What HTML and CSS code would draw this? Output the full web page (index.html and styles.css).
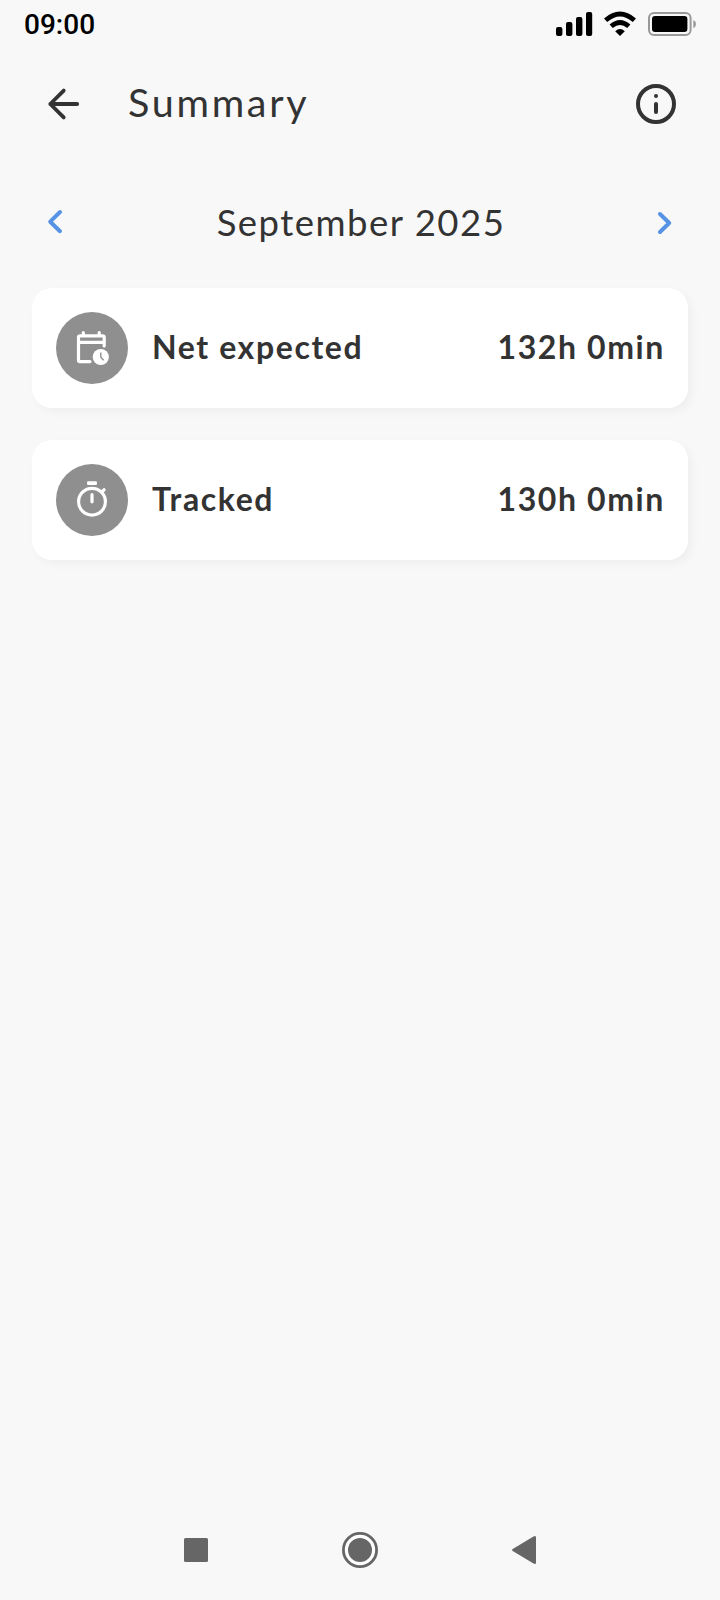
FILE: index.html
```html
<!DOCTYPE html>
<html lang="en">
<head>
<meta charset="utf-8">
<title>Summary</title>
<link rel="stylesheet" href="styles.css">
</head>
<body>
<div class="screen">
  <div class="status">
    <span class="time">09:00</span>
    <svg width="144" height="48" viewBox="552 0 144 48">
      <rect x="556" y="27" width="6.4" height="9" rx="2"/>
      <rect x="566" y="22" width="6.4" height="14" rx="2"/>
      <rect x="576" y="17" width="6.4" height="19" rx="2"/>
      <rect x="586" y="12" width="6.2" height="24" rx="2"/>
      <path d="M605.6 20.3Q620 7.8 634.4 20.3M611.2 26.3Q620 18.6 628.8 26.3" fill="none" stroke="#000" stroke-width="4.8"/>
      <path d="M615.2 31.3Q620 26.6 624.8 31.3L620 36Z"/>
      <rect x="649" y="13" width="41.6" height="22" rx="5" fill="none" stroke="#999" stroke-width="2"/>
      <rect x="652" y="16" width="35.4" height="16" rx="3"/>
      <path d="M693.3 20Q696 21 696 24T693.3 28Z" fill="#999"/>
    </svg>
  </div>
  <header class="appbar">
    <svg width="36" height="36" viewBox="46 86 36 36"><path class="ink" d="M77.2 104H50.3M63.7 90.6L50.3 104L63.7 117.4" stroke-width="3.8"/></svg>
    <h1 class="title">Summary</h1>
    <svg width="40" height="40" viewBox="636 84 40 40"><circle class="ink" cx="656" cy="104" r="18" stroke-width="4"/><path class="ink" d="M656 96h.01M656 104v8" stroke-width="4"/></svg>
  </header>
  <div class="month">
    <svg width="16" height="28" viewBox="47 209 16 28"><path class="blue" d="M60 212L50.2 221.7L60 231.2"/></svg>
    <h2 class="month-name">September 2025</h2>
    <svg width="16" height="28" viewBox="657 209 16 28"><path class="blue" d="M660 214L669.2 223L660 232"/></svg>
  </div>
  <main class="cards">
    <section class="card">
      <svg width="72" height="72" viewBox="56 312 72 72">
        <circle cx="92" cy="348" r="36" fill="#8f8f8f"/>
        <path class="white" d="M90 361.6H80Q78.5 361.6 78.5 360V337.5Q78.5 335.8 80.2 335.8H102.5Q104.2 335.8 104.2 337.5V346M78.5 342.4H104M83.3 332.5V336M99.2 332.5V336"/>
        <circle cx="100.8" cy="357" r="8.1" fill="#fff"/>
        <path d="M100.8 352.5V357.3L103.6 360.2" fill="none" stroke="#8f8f8f" stroke-width="1.4"/>
      </svg>
      <span class="label">Net expected</span><span class="value">132h 0min</span>
    </section>
    <section class="card">
      <svg width="72" height="72" viewBox="56 464 72 72">
        <circle cx="92" cy="500" r="36" fill="#8f8f8f"/>
        <circle class="white" cx="92" cy="501.7" r="13.4"/>
        <rect x="87" y="481.2" width="10" height="3.8" rx="1.2" fill="#fff"/>
        <path class="white" d="M92 494.6V501.8M101.8 491.9L104.1 489.8"/>
      </svg>
      <span class="label">Tracked</span><span class="value">130h 0min</span>
    </section>
  </main>
  <nav class="nav">
    <svg width="24" height="36" viewBox="0 0 24 36"><rect y="6" width="24" height="24" rx="1.5"/></svg>
    <svg width="36" height="36" viewBox="0 0 36 36"><circle cx="18" cy="18" r="16.6" fill="#fff" stroke="#666" stroke-width="2.8"/><circle cx="18" cy="18" r="12"/></svg>
    <svg width="24" height="36" viewBox="0 0 24 36"><path d="M.7 17Q-.6 18 .7 19L21.5 31.6Q24 32.9 24 30.5V5.5Q24 3.1 21.5 4.4Z"/></svg>
  </nav>
</div>
</body>
</html>
```
FILE: styles.css
```css
* { box-sizing: border-box; }
body { margin: 0; background: #f8f8f8; color: #333; font-family: Lato, sans-serif; }
svg { display: block; flex: none; }
h1, h2 { margin: 0; font-weight: 400; white-space: nowrap; }
.screen { height: 1600px; display: flex; flex-direction: column; }
.status { height: 48px; padding: 0 24px; display: flex; align-items: center; justify-content: space-between; }
.time { color: #000; padding-top: 2px; font: 500 28px/46px Roboto, sans-serif; }
.appbar { height: 112px; padding: 0 44px 0 46px; display: flex; align-items: center; }
.title { flex: 1; padding: 0 0 5px 46px; font-size: 39.5px; line-height: 48px; letter-spacing: 2.7px; }
.month { height: 128px; padding: 0 47px 2px; display: flex; align-items: center; justify-content: space-between; }
.month-name { padding: 0 0 2px 2px; font-size: 36.5px; line-height: 48px; letter-spacing: 1.5px; }
.cards { flex: 1; padding: 0 32px; display: flex; flex-direction: column; gap: 32px; }
.card { height: 120px; padding: 24px; display: flex; align-items: center; gap: 24px; background: #fff; border-radius: 20px; box-shadow: 4px 4px 10px rgba(0, 0, 0, .04); font-size: 32px; font-weight: 700; white-space: nowrap; }
.label, .value { padding-bottom: 4px; letter-spacing: 1.6px; }
.label { flex: 1; }
.value { margin-right: -1px; }
.ink { fill: none; stroke: #333; stroke-linecap: round; stroke-linejoin: round; }
.blue { fill: none; stroke: #5693e5; stroke-width: 4; stroke-linecap: round; stroke-linejoin: round; }
.white { fill: none; stroke: #fff; stroke-width: 3.2; stroke-linecap: round; stroke-linejoin: round; }
.nav { height: 100px; padding: 0 184px; display: flex; align-items: center; justify-content: space-between; fill: #666; }
```
